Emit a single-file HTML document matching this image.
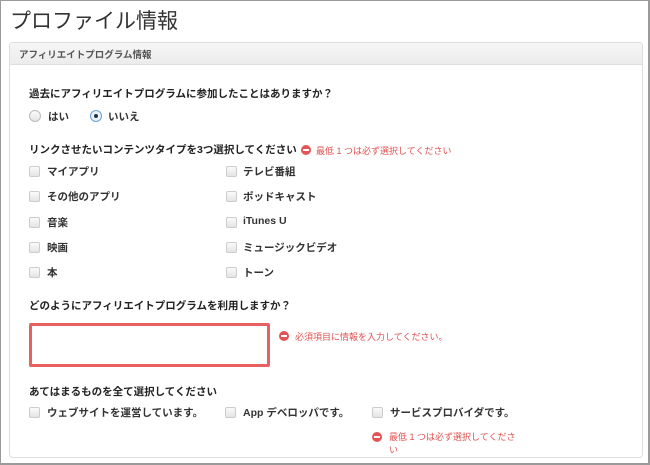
<!DOCTYPE html>
<html><head><meta charset="utf-8"><style>
*{margin:0;padding:0;box-sizing:border-box}
html,body{width:650px;height:465px;overflow:hidden;background:#fff}
body{font-family:"Liberation Sans","Noto Sans CJK JP",sans-serif;color:#222;position:relative;border:1px solid #9a9a9a;border-width:1px 2px 2px 1px}
.a{position:absolute;white-space:nowrap}
.t{left:9px;top:4px;font-size:21px;color:#333}
.panel{position:absolute;left:8px;top:41px;width:634px;height:416px;border:1px solid #ddd;border-radius:4px}
.hd{position:absolute;left:0;top:0;right:0;height:22px;background:linear-gradient(#f6f6f6,#ececec);border-bottom:1px solid #e0e0e0;border-radius:4px 4px 0 0}
.h{left:18px;top:46px;font-size:9.5px;font-weight:bold;color:#555}
.q{font-size:10.5px;font-weight:bold;color:#222}
.l{font-size:10.5px;font-weight:bold;color:#333}
.cb{position:absolute;width:11px;height:11px;border:1px solid #ccc;border-radius:2px;background:linear-gradient(#fafafa,#e4e4e4)}
.rd{position:absolute;width:12px;height:12px;border:1px solid #bbb;border-radius:50%;background:linear-gradient(#fafafa,#e4e4e4)}
.e{font-size:9px;color:#e05050}
.ei{position:absolute;width:10px;height:10px;border-radius:50%;background:#e25555}
.ei::after{content:"";position:absolute;left:2px;top:4px;width:6px;height:2px;background:#fff}
.ta{position:absolute;left:28px;top:322px;width:241px;height:44px;border:3px solid #e86060;border-radius:2px}
</style></head><body>
<div class="a t">プロファイル情報</div>
<div class="panel"><div class="hd"></div></div>
<div class="a h">アフィリエイトプログラム情報</div>

<div class="a q" style="left:28px;top:85px">過去にアフィリエイトプログラムに参加したことはありますか？</div>
<div class="rd" style="left:28px;top:109px"></div><div class="a l" style="left:47px;top:108px">はい</div>
<div class="rd" style="left:89px;top:109px;border-color:#6c9fd8;background:#eaf2fc"><div style="position:absolute;left:3px;top:3px;width:4px;height:4px;border-radius:50%;background:#234"></div></div><div class="a l" style="left:107px;top:108px">いいえ</div>

<div class="a q" style="left:28px;top:141px">リンクさせたいコンテンツタイプを3つ選択してください</div>
<div class="ei" style="left:300px;top:144px"></div><div class="a e" style="left:315px;top:143px">最低 1 つは必ず選択してください</div>

<div class="cb" style="left:28px;top:165px"></div><div class="a l" style="left:46px;top:163px">マイアプリ</div>
<div class="cb" style="left:225px;top:165px"></div><div class="a l" style="left:242px;top:163px">テレビ番組</div>
<div class="cb" style="left:28px;top:190px"></div><div class="a l" style="left:46px;top:188px">その他のアプリ</div>
<div class="cb" style="left:225px;top:190px"></div><div class="a l" style="left:242px;top:188px">ポッドキャスト</div>
<div class="cb" style="left:28px;top:216px"></div><div class="a l" style="left:46px;top:214px">音楽</div>
<div class="cb" style="left:225px;top:216px"></div><div class="a l" style="left:242px;top:214px">iTunes U</div>
<div class="cb" style="left:28px;top:241px"></div><div class="a l" style="left:46px;top:239px">映画</div>
<div class="cb" style="left:225px;top:241px"></div><div class="a l" style="left:242px;top:239px">ミュージックビデオ</div>
<div class="cb" style="left:28px;top:266px"></div><div class="a l" style="left:46px;top:264px">本</div>
<div class="cb" style="left:225px;top:266px"></div><div class="a l" style="left:242px;top:264px">トーン</div>

<div class="a q" style="left:28px;top:297px">どのようにアフィリエイトプログラムを利用しますか？</div>
<div class="ta"></div>
<div class="ei" style="left:278px;top:330px"></div><div class="a e" style="left:294px;top:329px">必須項目に情報を入力してください。</div>

<div class="a q" style="left:28px;top:383px">あてはまるものを全て選択してください</div>
<div class="cb" style="left:28px;top:406px"></div><div class="a l" style="left:46px;top:404px">ウェブサイトを運営しています。</div>
<div class="cb" style="left:224px;top:406px"></div><div class="a l" style="left:242px;top:404px">App デベロッパです。</div>
<div class="cb" style="left:371px;top:406px"></div><div class="a l" style="left:389px;top:404px">サービスプロバイダです。</div>
<div class="ei" style="left:371px;top:431px"></div><div class="a e" style="left:388px;top:429px">最低 1 つは必ず選択してくださ</div>
<div class="a e" style="left:388px;top:442px">い</div>
</body></html>
